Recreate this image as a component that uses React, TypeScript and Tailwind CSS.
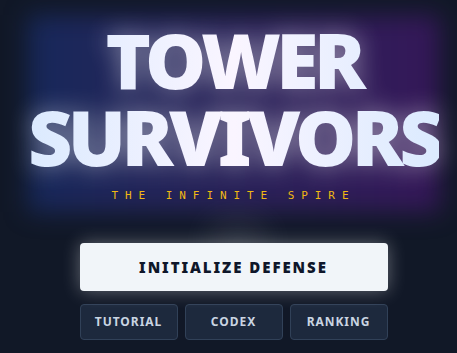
import React from "react";

const MENU = ["TUTORIAL", "CODEX", "RANKING"];

export default function App() {
  return (
    <div className="min-h-screen w-full bg-[#111827] flex flex-col items-center overflow-hidden pl-[10px] font-['Noto_Sans',sans-serif]">
      {/* title block */}
      <div className="relative mt-[15px] w-[412px] h-[197px] flex flex-col items-center">
        <div className="absolute inset-0 bg-gradient-to-r from-blue-900/50 to-purple-900/50 blur-md" />
        <h1 className="relative mt-[6px] text-center font-black text-[77px] leading-[77px] tracking-[-0.06em] bg-gradient-to-r from-blue-100 via-purple-50 to-blue-100 bg-clip-text text-transparent drop-shadow-[0_0_12px_rgba(255,255,255,0.45)]">
          TOWER
          <br />
          SURVIVORS
        </h1>
        <p className="relative mt-[15px] font-['DejaVu_Sans_Mono',monospace] text-[11px] leading-none tracking-[0.63em] text-[#f0b913]">
          THE INFINITE SPIRE
        </p>
      </div>

      {/* menu */}
      <div className="relative mt-[31px] w-[308px] flex flex-col gap-[13px]">
        <div className="absolute left-[128px] top-[-22px] w-[60px] h-[40px] rounded-full bg-white/10 blur-lg" />
        <button className="relative h-[48px] rounded bg-slate-100 text-[#0f172a] font-black text-[15px] tracking-[0.13em] shadow-[0_0_18px_rgba(255,255,255,0.35)]">
          INITIALIZE DEFENSE
        </button>
        <div className="grid grid-cols-3 gap-[7px]">
          {MENU.map((item) => (
            <button
              key={item}
              className="h-[36px] rounded bg-slate-800 border border-slate-700 text-slate-300 font-bold text-[12px] tracking-[0.08em]"
            >
              {item}
            </button>
          ))}
        </div>
      </div>
    </div>
  );
}
